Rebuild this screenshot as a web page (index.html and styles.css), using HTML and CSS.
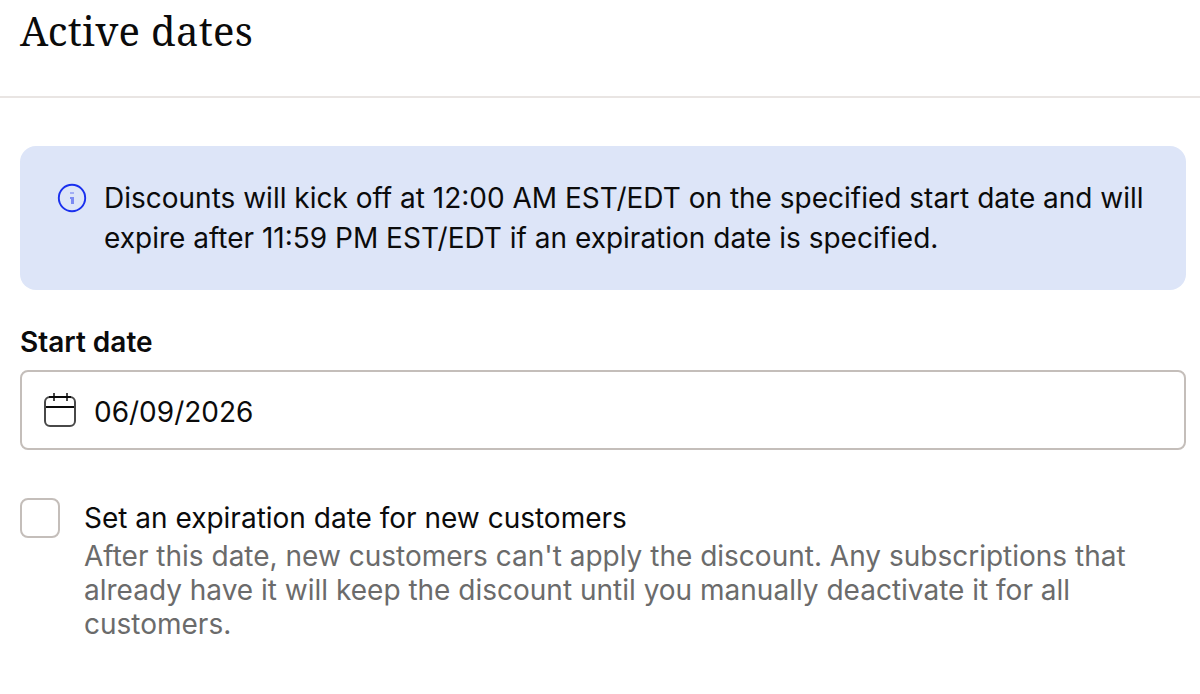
FILE: index.html
```html
<!DOCTYPE html>
<html lang="en">
<head>
<meta charset="utf-8">
<title>Active dates</title>
<link rel="stylesheet" href="styles.css">
</head>
<body>
<header class="header"><h1 class="title">Active dates</h1></header>
<main class="content">
<div class="notice">
<svg class="notice-icon" viewBox="0 0 30 30" fill="none" stroke="currentColor"><circle cx="15" cy="15" r="13.2" stroke-width="1.9"/><path opacity=".3" stroke-width="2" d="M13 10h4"/><path opacity=".5" stroke-width="2" d="M13 15h4"/><path opacity=".5" stroke-width="3" d="M15.500 16v5"/></svg>
<p class="notice-text">Discounts will kick off at 12:00 AM EST/EDT on the specified start date and will<br>expire after 11:59 PM EST/EDT if an expiration date is specified.</p>
</div>
<label class="label" for="start">Start date</label>
<div class="field" id="start">
<svg class="calendar" viewBox="0 0 32 36" fill="none" stroke="currentColor" stroke-width="2"><rect x="1" y="5" width="30" height="29" rx="5" opacity=".75"/><path d="M5 5h22M2 15h28"/><path opacity=".75" d="M10 1v8M23 1v8"/></svg>
<span class="date">06/09/2026</span>
</div>
<div class="option">
<span class="checkbox"></span>
<div class="option-body">
<p class="option-title">Set an expiration date for new customers</p>
<p class="option-help">After this date, new customers can't apply the discount. Any subscriptions that<br>already have it will keep the discount until you manually deactivate it for all<br>customers.</p>
</div>
</div>
</main>
</body>
</html>
```
FILE: styles.css
```css
* { box-sizing: border-box; }
body { margin: 0; background: #fff; color: #0b0b0b; font-family: Inter, sans-serif; font-size: 28px; }
h1, p { margin: 0; font-weight: 400; white-space: nowrap; }
.header { height: 98px; padding: 7px 20px 0; border-bottom: 2px solid #e9e5e3; }
.title { font: 400 40px/48px "Noto Serif", "Liberation Serif", serif; letter-spacing: 0.3px; }
.content { padding: 48px 14px 0 20px; }
.notice { display: flex; height: 144px; padding: 32px 37px; background: #dde5f8; border-radius: 16px; }
.notice-icon { width: 30px; height: 30px; margin: 5px 17px 0 0; color: #1a30ee; flex: none; }
.notice-text { line-height: 40px; }
.label { display: block; margin-top: 32px; height: 48px; line-height: 40px; font-weight: 600; }
.field { display: flex; align-items: center; height: 80px; padding-left: 22px; border: 2px solid #c4beba; border-radius: 8px; }
.calendar { width: 32px; height: 36px; margin-right: 18px; }
.date { padding-top: 3px; }
.option { display: flex; margin-top: 48px; gap: 24px; }
.checkbox { width: 40px; height: 40px; border: 2px solid #c4beba; border-radius: 8px; flex: none; }
.option-title { line-height: 40px; }
.option-help { padding-top: 1px; line-height: 34px; color: #6b6b6b; }
```
